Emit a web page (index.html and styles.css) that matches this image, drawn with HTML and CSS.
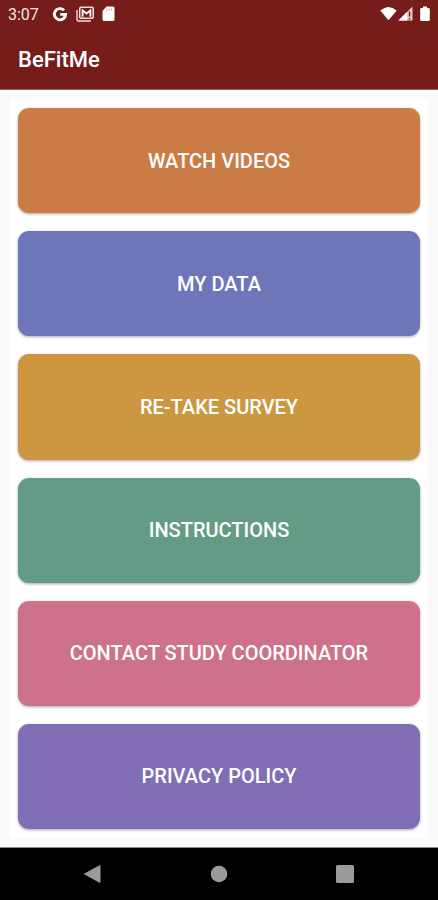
FILE: index.html
```
<!DOCTYPE html>
<html lang="en">
<head>
    <meta charset="UTF-8">
    <meta name="viewport" content="width=device-width, initial-scale=1.0">
    <title>BeFitMe</title>
    <link rel="stylesheet" href="styles.css">
</head>
<body>

    <header class="header">
        <div class="status-bar">
            <span class="time">3:07</span>
            <div class="status-icons">
                <svg width="16" height="16" viewBox="0 0 16 16">
                    <path d="M12 4.300A5.600 5.600 0 1 0 13.600 8.400H8.300" fill="none" stroke="#fff" stroke-width="2.900"/>
                </svg>
                <svg width="18" height="16" viewBox="0 0 18 16">
                    <path d="M1 4v9.500a1.500 1.500 0 0 0 1.500 1.500H15" fill="none" stroke="#f3e0e0" stroke-width="1.400"/>
                    <rect x="3.700" y="1.300" width="13.500" height="11" rx="1.200" fill="none" stroke="#f3e0e0" stroke-width="1.500"/>
                    <path d="M6.600 10.800V4.300l3.900 3.200 3.900-3.200v6.500" fill="none" stroke="#fff" stroke-width="1.800"/>
                </svg>
                <svg width="13" height="16" viewBox="0 0 13 16">
                    <path d="M4.500 .5H11a1.500 1.500 0 0 1 1.500 1.500v11.500a1.500 1.500 0 0 1-1.500 1.500H2a1.500 1.500 0 0 1-1.500-1.500V5z" fill="#fff"/>
                    <path d="M5 2.500v2M7.200 2.500v2M9.400 2.500v2" stroke="#c49b9a" stroke-width=".9"/>
                </svg>
            </div>
            <div class="system-icons">
                <svg width="17" height="16" viewBox="0 0 17 16">
                    <path d="M.3 4.500Q8.500-2.500 16.700 4.500L9.200 13.500Q8.500 14.300 7.800 13.500z" fill="#fff"/>
                </svg>
                <svg width="15" height="16" viewBox="0 0 15 16">
                    <path d="M14.500 .5v14H.5z" fill="#e3c9c8"/>
                    <path d="M9 6v8.500H.5z" fill="#fff"/>
                    <path d="M11.500 5.500v5M11.500 12v1.500" stroke="#761d1b" stroke-width="1.400"/>
                </svg>
                <svg class="battery" width="10" height="16" viewBox="0 0 10 16">
                    <path d="M3 .5h4V2h1.500a1.300 1.300 0 0 1 1.300 1.300v10.400a1.300 1.300 0 0 1-1.300 1.300h-7a1.300 1.300 0 0 1-1.300-1.300V3.300A1.300 1.300 0 0 1 1.500 2H3z" fill="#fff"/>
                </svg>
            </div>
        </div>
        <h1 class="title">BeFitMe</h1>
    </header>

    <main class="content">
        <div class="menu">
            <button class="menu-button videos">WATCH VIDEOS</button>
            <button class="menu-button data">MY DATA</button>
            <button class="menu-button survey">RE-TAKE SURVEY</button>
            <button class="menu-button instructions">INSTRUCTIONS</button>
            <button class="menu-button contact">CONTACT STUDY COORDINATOR</button>
            <button class="menu-button privacy">PRIVACY POLICY</button>
        </div>
    </main>

    <nav class="nav-bar">
        <button class="nav-button" aria-label="Back">
            <svg width="18" height="18" viewBox="0 0 18 18"><path d="M16 .5v17L.5 9z" fill="#9b9b9b" stroke="#9b9b9b" stroke-linejoin="round"/></svg>
        </button>
        <button class="nav-button" aria-label="Home">
            <svg width="18" height="18" viewBox="0 0 18 18"><circle cx="9" cy="9" r="8.300" fill="#9b9b9b"/></svg>
        </button>
        <button class="nav-button" aria-label="Recent apps">
            <svg width="18" height="18" viewBox="0 0 18 18"><rect width="18" height="18" rx="1.500" fill="#9b9b9b"/></svg>
        </button>
    </nav>

</body>
</html>
```
FILE: styles.css
```
body {
    display: flex;
    flex-direction: column;
    min-height: 100vh;
    margin: 0;
    background-color: #fafafa;
    font-family: Roboto, "Liberation Sans", sans-serif;
}

.header {
    background-color: #761d1b;
    color: white;
    border-bottom: 1px solid #9a5c5a;
}

.status-bar {
    display: flex;
    align-items: center;
    height: 28px;
    padding: 0 8px;
}

.time {
    font-size: 16px;
    color: #f3e4e4;
}

.status-icons {
    display: flex;
    gap: 8px;
    margin-left: 13px;
}

.system-icons {
    display: flex;
    gap: 1px;
    margin-left: auto;
}

.battery {
    margin-left: 6px;
}

.title {
    margin: 0;
    padding: 2px 18px 0;
    font-size: 22px;
    font-weight: 500;
    line-height: 59px;
}

.content {
    flex: 1;
    display: flex;
    padding: 9px 10px;
}

.menu {
    flex: 1;
    display: flex;
    flex-direction: column;
    gap: 18px;
    padding: 9px 8px;
    background-color: white;
}

.menu-button {
    flex: 1;
    border: none;
    border-radius: 11px;
    box-shadow: 0 1px 3px rgba(0, 0, 0, 0.35);
    font-family: inherit;
    font-size: 20px;
    font-weight: 500;
    color: white;
    cursor: pointer;
}

.videos {
    background-color: #cb7b46;
}

.data {
    background-color: #6c76b9;
}

.survey {
    background-color: #cc9740;
}

.instructions {
    background-color: #649b86;
}

.contact {
    background-color: #cd728a;
}

.privacy {
    background-color: #816db6;
}

.nav-bar {
    display: flex;
    height: 52px;
    padding: 0 30px;
    border-top: 1px solid #888;
    background-color: black;
}

.nav-button {
    flex: 1;
    display: flex;
    align-items: center;
    justify-content: center;
    padding: 0;
    border: none;
    background: none;
    cursor: pointer;
}
```
